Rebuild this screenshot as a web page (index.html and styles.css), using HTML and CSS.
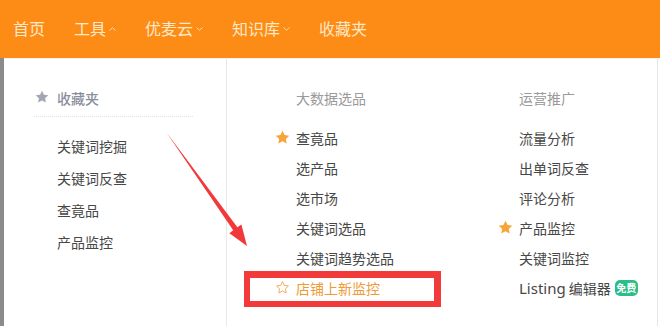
FILE: index.html
```html
<!DOCTYPE html>
<html lang="zh">
<head>
<meta charset="utf-8">
<link rel="stylesheet" href="styles.css">
</head>
<body>
<header class="nav">
  <span class="nav-item">首页</span>
  <span class="nav-item">工具<svg class="caret" viewBox="0 0 7 4"><path d="M0.5 3.5L3.5 0.7L6.5 3.5"/></svg></span>
  <span class="nav-item">优麦云<svg class="caret" viewBox="0 0 7 4"><path d="M0.5 0.5L3.5 3.3L6.5 0.5"/></svg></span>
  <span class="nav-item">知识库<svg class="caret" viewBox="0 0 7 4"><path d="M0.5 0.5L3.5 3.3L6.5 0.5"/></svg></span>
  <span class="nav-item">收藏夹</span>
</header>
<main class="stage">
  <div class="backdrop"></div>
  <section class="panel">
    <div class="col col-fav">
      <div class="fav-head">
        <svg class="star star-gray" viewBox="0 0 24 24"><path d="M12 1.2l3.3 6.8 7.5 1-5.5 5.2 1.4 7.4L12 18l-6.7 3.6 1.4-7.4L1.2 9l7.5-1z"/></svg>
        <span>收藏夹</span>
      </div>
      <ul class="fav-list">
        <li>关键词挖掘</li>
        <li>关键词反查</li>
        <li>查竟品</li>
        <li>产品监控</li>
      </ul>
    </div>
    <div class="col col-mid">
      <div class="col-head">大数据选品</div>
      <ul class="list">
        <li><svg class="star star-fill" viewBox="0 0 24 24"><path d="M12 1.2l3.3 6.8 7.5 1-5.5 5.2 1.4 7.4L12 18l-6.7 3.6 1.4-7.4L1.2 9l7.5-1z"/></svg>查竟品</li>
        <li>选产品</li>
        <li>选市场</li>
        <li>关键词选品</li>
        <li>关键词趋势选品</li>
        <li class="hot"><svg class="star star-line" viewBox="0 0 24 24"><path d="M12 2.6l2.9 6 6.6.9-4.8 4.6 1.2 6.6L12 17.5l-5.9 3.2 1.2-6.6-4.8-4.6 6.6-.9z"/></svg>店铺上新监控</li>
      </ul>
    </div>
    <div class="col col-right">
      <div class="col-head">运营推广</div>
      <ul class="list">
        <li>流量分析</li>
        <li>出单词反查</li>
        <li>评论分析</li>
        <li><svg class="star star-fill" viewBox="0 0 24 24"><path d="M12 1.2l3.3 6.8 7.5 1-5.5 5.2 1.4 7.4L12 18l-6.7 3.6 1.4-7.4L1.2 9l7.5-1z"/></svg>产品监控</li>
        <li>关键词监控</li>
        <li><span class="latin">Listing</span>&nbsp;编辑器<span class="badge">免费</span></li>
      </ul>
    </div>
  </section>
  <div class="highlight"></div>
  <svg class="arrow" viewBox="0 0 660 326"><polygon points="166.5,132.5 237.4,227.2 241.4,224.4 247,246 229.4,233.2 233.2,230.3"/></svg>
</main>
</body>
</html>
```

FILE: styles.css
```css
* { box-sizing: border-box; }
html, body { margin: 0; padding: 0; }
body {
  width: 660px;
  height: 326px;
  overflow: hidden;
  background: #fff;
  font-family: "Microsoft YaHei", "Noto Sans CJK SC", "Noto Sans", sans-serif;
  position: relative;
}
.nav {
  height: 58px;
  background: #fd8c16;
  display: flex;
  align-items: center;
  padding-left: 13px;
  padding-bottom: 3px;
}
.nav-item {
  display: flex;
  align-items: center;
  font-size: 16px;
  color: #ffe8c6;
  margin-right: 29px;
  white-space: nowrap;
}
.caret {
  width: 7px;
  height: 4px;
  margin-left: 3px;
  margin-top: 2px;
  fill: none;
  stroke: #ffd9a6;
  stroke-width: 1;
}
.stage {
  display: flex;
  height: 268px;
}
.backdrop {
  width: 4px;
  background: #8b8b8b;
  flex: none;
}
.panel {
  flex: none;
  width: 654px;
  display: flex;
  border-right: 1px solid #e6e6e6;
  border-top: 1px solid #fdf0f0;
}
.col {
  padding-top: 29px;
}
.col-fav {
  width: 223px;
  border-right: 1px solid #e8e8e8;
  padding-left: 30px;
}
.fav-head {
  width: 159px;
  height: 29px;
  display: flex;
  align-items: flex-start;
  border-bottom: 1px dotted #e0e2e8;
  font-size: 14px;
  line-height: 20px;
  color: #8a8f9c;
  font-weight: 500;
}
.star {
  width: 15px;
  height: 15px;
  flex: none;
}
.star-gray {
  fill: #a3a7b3;
  margin: 2px 8px 0 1px;
  width: 14px;
  height: 14px;
}
ul { list-style: none; margin: 0; padding: 0; }
.fav-list {
  margin-top: 13px;
  padding-left: 23px;
}
.fav-list li {
  font-size: 14px;
  line-height: 32px;
  color: #474747;
}
.col-mid {
  width: 223px;
  padding-left: 69px;
}
.col-right {
  flex: 1;
  padding-left: 69px;
}
.col-head {
  font-size: 14px;
  line-height: 20px;
  color: #9a9a9a;
}
.list {
  margin-top: 15px;
}
.list li {
  position: relative;
  font-size: 14px;
  line-height: 30px;
  height: 30px;
  color: #474747;
  display: flex;
  align-items: center;
  white-space: nowrap;
}
.list li .star {
  position: absolute;
  left: -21px;
  top: 7px;
}
.star-fill { fill: #f7a53a; }
.star-line {
  fill: none;
  stroke: #f4ad5c;
  stroke-width: 1.6;
  stroke-linejoin: round;
}
.list li.hot { color: #ef9a37; }
.latin {
  font-family: "Microsoft YaHei", "Noto Sans", "Open Sans", sans-serif;
  font-size: 15px;
}
.badge {
  display: inline-block;
  margin-left: 4px;
  width: 23px;
  height: 16px;
  border-radius: 5px;
  background: #2bbd8a;
  color: #fff;
  font-size: 10px;
  line-height: 16px;
  text-align: center;
  font-weight: 700;
}
.highlight {
  position: absolute;
  left: 244px;
  top: 271px;
  width: 197px;
  height: 36px;
  border: 6px solid #f23a3a;
  border-top-width: 7px;
  border-right-width: 7px;
}
.arrow {
  position: absolute;
  left: 0;
  top: 0;
  width: 660px;
  height: 326px;
  fill: #f23838;
  pointer-events: none;
}
```
